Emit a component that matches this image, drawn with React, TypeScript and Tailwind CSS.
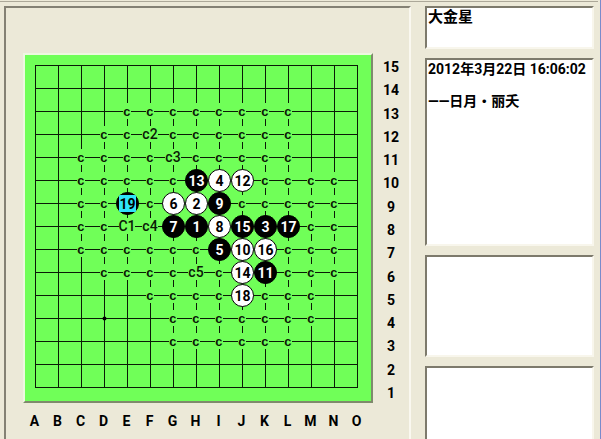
const CELL = 23;
const MARGIN = 10;
const COLUMNS = 'ABCDEFGHIJKLMNO'.split('');
const ROWS = Array.from({ length: 15 }, (_, i) => 15 - i);

const px = (column: string) => MARGIN + COLUMNS.indexOf(column) * CELL;
const py = (row: number) => MARGIN + (15 - row) * CELL;

type Stone = { n: number; at: [string, number] };

const STONES: Stone[] = [
  { n: 1, at: ['H', 8] },
  { n: 2, at: ['H', 9] },
  { n: 3, at: ['K', 8] },
  { n: 4, at: ['I', 10] },
  { n: 5, at: ['I', 7] },
  { n: 6, at: ['G', 9] },
  { n: 7, at: ['G', 8] },
  { n: 8, at: ['I', 8] },
  { n: 9, at: ['I', 9] },
  { n: 10, at: ['J', 7] },
  { n: 11, at: ['K', 6] },
  { n: 12, at: ['J', 10] },
  { n: 13, at: ['H', 10] },
  { n: 14, at: ['J', 6] },
  { n: 15, at: ['J', 8] },
  { n: 16, at: ['K', 7] },
  { n: 17, at: ['L', 8] },
  { n: 18, at: ['J', 5] },
  { n: 19, at: ['E', 9] },
];
const LAST_MOVE = 19;

// Intersections marked "c", row by row.
const MARKED: [number, string][] = [
  [13, 'EFGHIJKL'],
  [12, 'DEGHIJKL'],
  [11, 'CDEFHIJKL'],
  [10, 'CDEFGKLMN'],
  [9, 'CDFJKLMN'],
  [8, 'CDMN'],
  [7, 'CDEFGHLMN'],
  [6, 'DEFGILMN'],
  [5, 'FGHIKLM'],
  [4, 'GHIJKLM'],
  [3, 'GHIJKL'],
];

const NAMED: { label: string; at: [string, number] }[] = [
  { label: 'C1', at: ['E', 8] },
  { label: 'c2', at: ['F', 12] },
  { label: 'c3', at: ['G', 11] },
  { label: 'c4', at: ['F', 8] },
  { label: 'c5', at: ['H', 6] },
];

function Board() {
  const end = MARGIN + 14 * CELL;
  return (
    <svg width="346" height="346" viewBox="0 0 346 346" className="block" role="img" aria-label="五子棋">
      <g stroke="#0a1a06" strokeWidth="1" shapeRendering="crispEdges">
        {COLUMNS.map((c) => (
          <line key={c} x1={px(c) + 0.5} x2={px(c) + 0.5} y1={MARGIN} y2={end + 1} />
        ))}
        {ROWS.map((r) => (
          <line key={r} x1={MARGIN} x2={end + 1} y1={py(r) + 0.5} y2={py(r) + 0.5} />
        ))}
      </g>
      <circle cx={px('D') + 0.5} cy={py(4) + 0.5} r="2" />
      <g className="font-['Liberation_Mono',monospace] text-[13px] font-bold" fill="#0a1a06" textAnchor="middle">
        {MARKED.flatMap(([row, columns]) =>
          columns.split('').map((c) => (
            <g key={c + row}>
              <rect x={px(c) - 4} y={py(row) - 8} width="8" height="16" fill="#70ff58" />
              <text x={px(c)} y={py(row) + 5}>c</text>
            </g>
          )),
        )}
      </g>
      <g fill="#0a1a06" className="font-['Roboto',sans-serif] text-[14px] font-medium" textAnchor="middle">
        {NAMED.map(({ label, at: [c, r] }) => (
          <g key={c + r}>
            <rect x={px(c) - 8} y={py(r) - 8} width="16" height="16" fill="#70ff58" />
            <text x={px(c)} y={py(r) + 5}>{label}</text>
          </g>
        ))}
      </g>
      <g className="font-['Roboto',sans-serif] text-[14px] font-bold" textAnchor="middle">
        {STONES.map(({ n, at: [c, r] }) => {
          const black = n % 2 === 1;
          const last = n === LAST_MOVE;
          const x = px(c) + 0.5;
          const y = py(r) + 0.5;
          return (
            <g key={n}>
              <circle cx={x} cy={y} r="11" fill={black ? '#000' : '#fff'} stroke="#000" />
              {last && <rect x={x - 8.5} y={y - 8.5} width="17" height="17" rx="1" fill="#2fe3fa" />}
              <text x={x} y={y + 5} fill={black && !last ? '#fff' : '#000'}>{n}</text>
            </g>
          );
        })}
      </g>
    </svg>
  );
}

const FIELD =
  "block w-full shrink-0 resize-none overflow-hidden rounded-none border-2 border-t-[#7d7a6c] border-l-[#7d7a6c] border-r-[#f8f6ec] border-b-[#f8f6ec] bg-white px-px py-px font-['Roboto','Noto_Sans_CJK_SC',sans-serif] font-bold leading-4 text-black outline-none";

export default function App() {
  return (
    <div className="flex h-screen flex-col overflow-hidden border-r border-[#7a8acb] bg-[#ece9d8] font-['Roboto','Noto_Sans_CJK_SC',sans-serif] text-black">
      <div className="mt-px mr-0.5 h-px shrink-0 bg-[#aca899]" />
      <div className="flex min-h-0 flex-1 gap-3.5 pt-1 pr-1.5 pl-1">
        <main className="shrink-0 border-2 border-b-0 border-t-[#848174] border-l-[#848174] border-r-[#faf8f0] pt-[45px] pr-2 pl-[17px]">
          <div className="flex gap-2">
            <div className="border-2 border-t-[#eef8e0] border-l-[#eef8e0] border-r-[#7f8a6c] border-b-[#7f8a6c] bg-[#70ff58]">
              <Board />
            </div>
            <ol className="mt-1 flex w-5 flex-col justify-between self-stretch text-center text-[14px] leading-5 font-bold">
              {ROWS.map((r) => (
                <li key={r}>{r}</li>
              ))}
            </ol>
          </div>
          <ol className="mt-2 flex text-center text-[14px] leading-5 font-bold">
            {COLUMNS.map((c) => (
              <li key={c} className="w-[23px]">{c}</li>
            ))}
          </ol>
        </main>
        <aside className="flex min-w-0 flex-1 flex-col gap-[9px]">
          <textarea aria-label="标题" readOnly className={`${FIELD} h-[43px] text-[15px]`} defaultValue="大金星" />
          <textarea
            aria-label="说明"
            readOnly
            className={`${FIELD} h-[188px] text-[14px]`}
            defaultValue={'2012年3月22日 16:06:02\n\n——日月・丽夭'}
          />
          <textarea aria-label="注释" readOnly className={`${FIELD} h-[102px] text-[14px]`} />
          <textarea aria-label="备注" readOnly className={`${FIELD} min-h-[73px] flex-1 border-b-0 text-[14px]`} />
        </aside>
      </div>
    </div>
  );
}
